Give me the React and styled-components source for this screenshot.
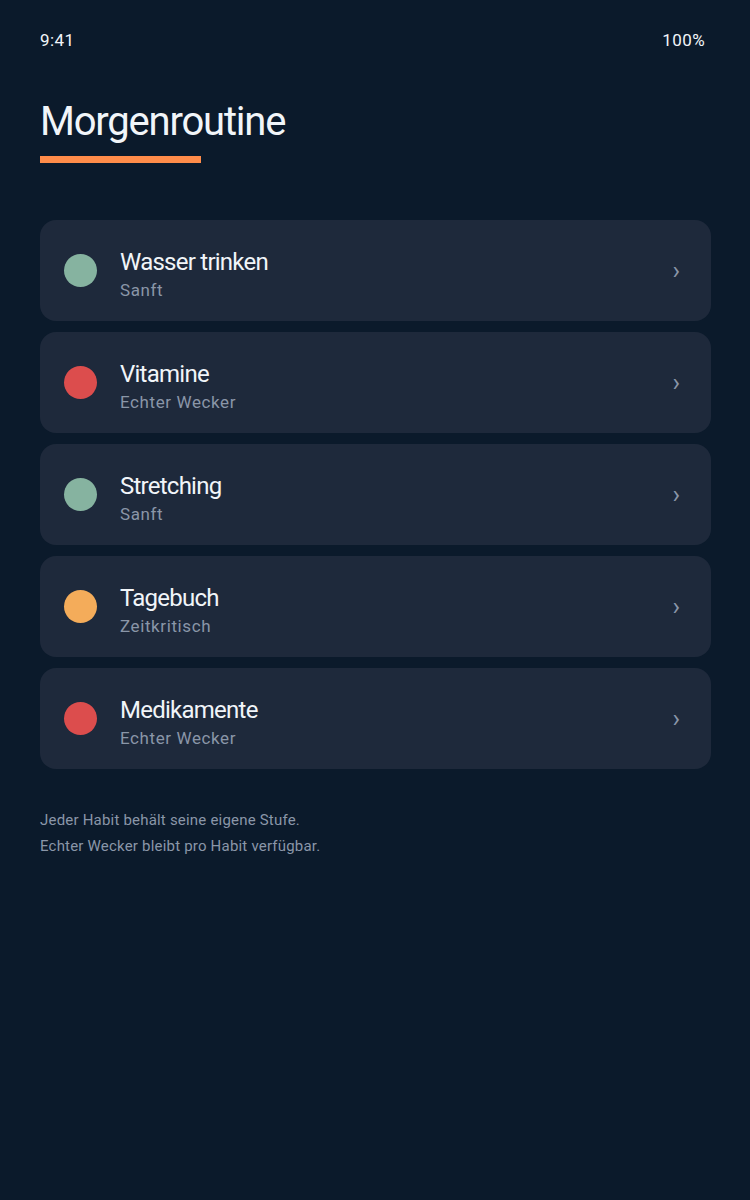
import React from "react";
import styled, { createGlobalStyle } from "styled-components";

const Colors = {
  bg: "#0b1a2b",
  card: "#1e293b",
  text: "#f1f5f9",
  muted: "#8a96a8",
  accent: "#ff8c4a",
  green: "#86b3a0",
  red: "#dc4d4d",
  orange: "#f4ac5a",
};

const habits = [
  { name: "Wasser trinken", level: "Sanft", color: Colors.green },
  { name: "Vitamine", level: "Echter Wecker", color: Colors.red },
  { name: "Stretching", level: "Sanft", color: Colors.green },
  { name: "Tagebuch", level: "Zeitkritisch", color: Colors.orange },
  { name: "Medikamente", level: "Echter Wecker", color: Colors.red },
];

const GlobalStyle = createGlobalStyle`
  html, body {
    margin: 0;
    padding: 0;
    background: ${Colors.bg};
  }
  body {
    font-family: Roboto, "Noto Sans", sans-serif;
    color: ${Colors.text};
  }
`;

const Screen = styled.div`
  min-height: 1200px;
  background: ${Colors.bg};
  padding: 0 39px 0 40px;
  box-sizing: border-box;
`;

const StatusBar = styled.div`
  display: flex;
  justify-content: space-between;
  align-items: center;
  height: 80px;
  font-size: 17px;
  letter-spacing: 0.4px;
  padding-right: 6px;
`;

const Header = styled.div`
  padding-top: 18px;
`;

const Title = styled.h1`
  margin: 0;
  font-size: 40px;
  font-weight: 400;
  letter-spacing: -1.2px;
  line-height: 48px;
`;

const Underline = styled.div`
  width: 161px;
  height: 7px;
  margin-top: 10px;
  background: ${Colors.accent};
`;

const List = styled.div`
  display: flex;
  flex-direction: column;
  gap: 11px;
  margin-top: 57px;
`;

const Card = styled.div`
  display: flex;
  align-items: center;
  height: 101px;
  padding: 0 31px 0 24px;
  border-radius: 16px;
  background: ${Colors.card};
  box-sizing: border-box;
`;

const Dot = styled.span`
  width: 33px;
  height: 33px;
  border-radius: 50%;
  background: ${props => props.color};
  flex-shrink: 0;
`;

const Texts = styled.div`
  flex: 1;
  margin-left: 23px;
  display: flex;
  flex-direction: column;
  padding-top: 8px;
`;

const Name = styled.div`
  font-size: 24px;
  letter-spacing: -0.75px;
  line-height: 30px;
`;

const Level = styled.div`
  font-size: 17px;
  color: ${Colors.muted};
  letter-spacing: 0.6px;
  line-height: 26px;
`;

const Chevron = styled.span`
  font-size: 25px;
  color: ${Colors.muted};
  line-height: 1;
`;

const Footer = styled.div`
  margin-top: 38px;
  font-size: 15px;
  line-height: 26px;
  letter-spacing: 0.2px;
  color: ${Colors.muted};
`;

export default function App() {
  return (
    <>
      <GlobalStyle />
      <Screen>
        <StatusBar>
          <span>9:41</span>
          <span>100%</span>
        </StatusBar>
        <Header>
          <Title>Morgenroutine</Title>
          <Underline />
        </Header>
        <List>
          {habits.map(h => (
            <Card key={h.name}>
              <Dot color={h.color} />
              <Texts>
                <Name>{h.name}</Name>
                <Level>{h.level}</Level>
              </Texts>
              <Chevron>›</Chevron>
            </Card>
          ))}
        </List>
        <Footer>
          Jeder Habit behält seine eigene Stufe.
          <br />
          Echter Wecker bleibt pro Habit verfügbar.
        </Footer>
      </Screen>
    </>
  );
}
